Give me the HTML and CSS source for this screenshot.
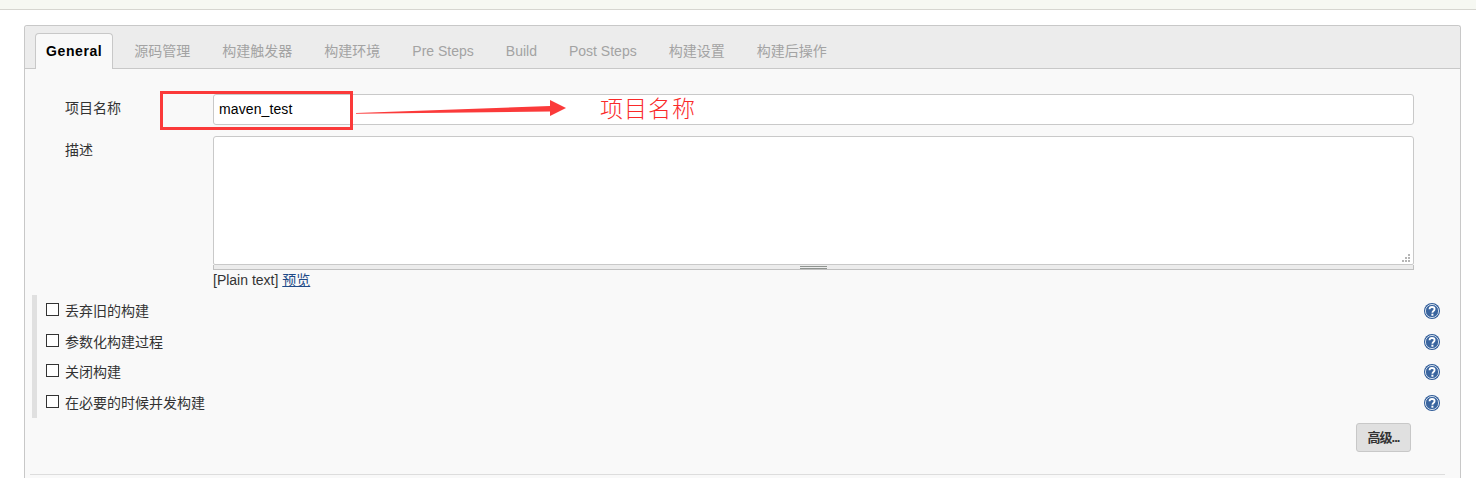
FILE: index.html
```html
<!DOCTYPE html>
<html lang="zh">
<head>
  <meta charset="UTF-8">
  <title>General</title>
  <link rel="stylesheet" href="styles.css">
</head>
<body>
  <div class="top-strip"></div>

  <div class="panel">
    <ul class="tabs">
      <li class="tab active">General</li>
      <li class="tab">源码管理</li>
      <li class="tab">构建触发器</li>
      <li class="tab">构建环境</li>
      <li class="tab">Pre Steps</li>
      <li class="tab">Build</li>
      <li class="tab">Post Steps</li>
      <li class="tab">构建设置</li>
      <li class="tab">构建后操作</li>
    </ul>

    <div class="form">
      <div class="field name-field">
        <label class="field-label">项目名称</label>
        <input class="text-input" type="text" value="maven_test">
      </div>
      <div class="field desc-field">
        <label class="field-label">描述</label>
        <div class="desc-box">
          <div class="fake-textarea">
            <svg class="resize-dots" width="9" height="9" viewBox="0 0 9 9">
              <path d="M6 0h2v2H6zM3 3h2v2H3zM6 3h2v2H6zM0 6h2v2H0zM3 6h2v2H3zM6 6h2v2H6z" fill="#b5b5b5"/>
            </svg>
          </div>
          <div class="grip"><span></span></div>
          <div class="preview">[Plain text] <a href="#">预览</a></div>
        </div>
      </div>

      <div class="options">
        <div class="option">
          <span class="check"></span><span class="option-text">丢弃旧的构建</span>
          <svg class="help"><use href="#help-icon"/></svg>
        </div>
        <div class="option">
          <span class="check"></span><span class="option-text">参数化构建过程</span>
          <svg class="help"><use href="#help-icon"/></svg>
        </div>
        <div class="option">
          <span class="check"></span><span class="option-text">关闭构建</span>
          <svg class="help"><use href="#help-icon"/></svg>
        </div>
        <div class="option">
          <span class="check"></span><span class="option-text">在必要的时候并发构建</span>
          <svg class="help"><use href="#help-icon"/></svg>
        </div>
      </div>

      <div class="adv-row"><button class="adv-button">高级...</button></div>
      <div class="divider"></div>
    </div>
  </div>

  <!-- red annotations drawn over the screenshot -->
  <div class="mark-box"></div>
  <svg class="mark-arrow" width="216" height="20" viewBox="0 0 216 20">
    <path d="M0 14L194 7L194 1L210 9L194 17L194 12.5L0 14.7Z" fill="#fb3a3a"/>
  </svg>
  <div class="mark-text">项目名称</div>

  <svg width="0" height="0" class="defs">
    <symbol id="help-icon" viewBox="0 0 16 16">
      <circle cx="8" cy="8" r="8" fill="#2f5b98"/>
      <circle cx="8" cy="8" r="6.6" fill="#3a659f" stroke="#dfe8f2" stroke-width="0.9"/>
      <path d="M5.5 6.3C5.6 4.8 6.7 4 8 4c1.5 0 2.6.9 2.6 2.1 0 2-2.2 1.9-2.2 3.6" fill="none" stroke="#fff" stroke-width="1.8"/>
      <rect x="7.4" y="10.7" width="2" height="2" fill="#fff"/>
    </symbol>
  </svg>
</body>
</html>
```

FILE: styles.css
```css
html, body {
  margin: 0;
  padding: 0;
  height: 478px;
  overflow: hidden;
  background: #fff;
}

body {
  font-family: "Liberation Sans", "Noto Sans CJK SC", sans-serif;
  font-size: 14px;
  color: #333;
  position: relative;
}

.top-strip {
  height: 9px;
  background: #f6f8f2;
  border-bottom: 1px solid #d6d6d0;
}

.panel {
  margin: 15px 15px 0 24px;
  height: 470px;
  background: #f9f9f9;
  border: 1px solid #c8c8c8;
  border-bottom: none;
  border-radius: 3px 3px 0 0;
}

.tabs {
  display: flex;
  list-style: none;
  margin: 0;
  padding: 7px 0 0 10px;
  height: 35px;
  background: #ececec;
  border-bottom: 1px solid #c8c8c8;
  border-radius: 3px 3px 0 0;
}

.tab {
  padding: 0 11px 0 21px;
  line-height: 37px;
  color: #a3a3a3;
  white-space: nowrap;
}

.tab.active {
  height: 35px;
  padding: 0 10px;
  line-height: 35px;
  color: #000;
  font-weight: bold;
  letter-spacing: 0.6px;
  background: #f9f9f9;
  border: 1px solid #c8c8c8;
  border-bottom: none;
  border-radius: 4px 4px 0 0;
}

.form {
  padding-top: 25px;
  position: relative;
}

.field {
  display: flex;
  padding-left: 40px;
}

.field-label {
  width: 148px;
  flex: none;
  color: #333;
  line-height: 29px;
}

.desc-field {
  margin-top: 11px;
}

.text-input {
  width: 1201px;
  height: 31px;
  box-sizing: border-box;
  padding: 0 5px 2px;
  font-family: inherit;
  font-size: 14px;
  letter-spacing: 0.1px;
  color: #000;
  background: #fff;
  border: 1px solid #c9c9c9;
  border-radius: 3px;
  outline: none;
}

.desc-box {
  width: 1201px;
}

.fake-textarea {
  height: 129px;
  box-sizing: border-box;
  background: #fff;
  border: 1px solid #c9c9c9;
  border-radius: 3px 3px 2px 2px;
  position: relative;
}

.resize-dots {
  position: absolute;
  right: 2px;
  bottom: 1px;
}

.grip {
  height: 4px;
  background: #ececec;
  border: 1px solid #c0c0c0;
  border-top: none;
  display: flex;
  justify-content: center;
}

.grip span {
  display: block;
  width: 27px;
  height: 1px;
  margin-top: 1px;
  border-top: 1px solid #8f9490;
  border-bottom: 1px solid #8f9490;
}

.preview {
  line-height: 20px;
  color: #333;
}

.preview a {
  color: #204a87;
  text-decoration: underline;
}

.options {
  margin: 5px 0 0 7px;
  height: 123px;
  border-left: 5px solid #e0e0e0;
  padding-right: 20px;
}

.option {
  display: flex;
  align-items: center;
  height: 30.5px;
  padding-left: 9px;
}

.check {
  width: 11px;
  height: 11px;
  border: 1px solid #333;
  background: #fff;
  flex: none;
  margin-top: -1px;
}

.option-text {
  margin-left: 6px;
  flex: 1;
}

.help {
  width: 16px;
  height: 16px;
  flex: none;
  margin-top: 2px;
}

.adv-row {
  display: flex;
  justify-content: flex-end;
  padding-right: 49px;
  margin-top: 5px;
}

.adv-button {
  width: 55px;
  height: 29px;
  padding: 0 0 2px;
  font-family: inherit;
  font-size: 13px;
  font-weight: bold;
  letter-spacing: -1px;
  color: #333;
  background: #e0e0e0;
  border: 1px solid #c8c8c8;
  border-radius: 3px;
}

.divider {
  margin: 22px 15px 0 5px;
  border-top: 1px solid #ddd;
}

.mark-box {
  position: absolute;
  left: 160px;
  top: 91px;
  width: 187px;
  height: 33px;
  border: 3px solid #fb3a3a;
}

.mark-arrow {
  position: absolute;
  left: 356px;
  top: 99px;
}

.mark-text {
  position: absolute;
  left: 600px;
  top: 94px;
  font-size: 23px;
  font-weight: 300;
  line-height: 30px;
  letter-spacing: 1px;
  color: #fa2a2a;
}

.defs {
  position: absolute;
}
```
